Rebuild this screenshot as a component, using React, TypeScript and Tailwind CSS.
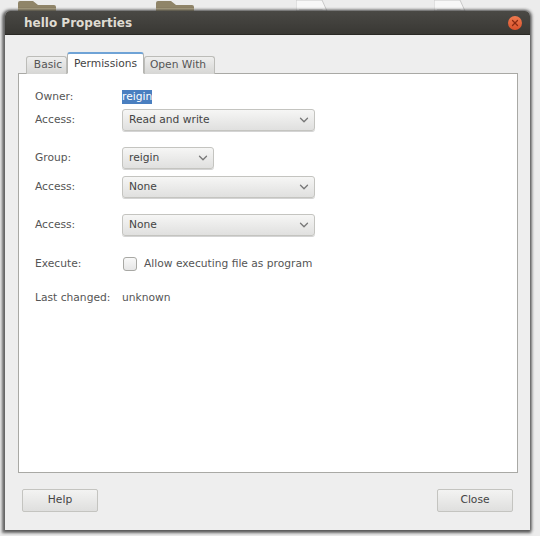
import { ChevronDown, X } from "lucide-react";

const font = "[font-family:'DejaVu_Sans',sans-serif]";

function FolderTop({ className }: { className: string }) {
    return (
        <svg className={className} width="38" height="11" viewBox="0 0 38 11">
            <path d="M0 11V3Q0 1 2 1H15L20 5H36Q38 5 38 7V11Z" fill="#8f8468" />
            <path d="M0 11V8H38V11Z" fill="#b3a888" />
        </svg>
    );
}

function PageTop({ className }: { className: string }) {
    return (
        <svg className={className} width="32" height="11" viewBox="0 0 32 11">
            <path d="M0 0H26L31 11H0Z" fill="#f7f7f7" stroke="#c9c9c9" />
            <path d="M3 9H26L28 11H3Z" fill="#dcdcdc" />
        </svg>
    );
}

function Select({ label, width }: { label: string; width: string }) {
    return (
        <div className={`${width} h-[22px] flex items-center justify-between pl-[6px] pr-[3px] rounded-[3px] border border-[#c4c4c0] bg-gradient-to-b from-[#f6f6f5] to-[#e0e0df] shadow-[0_1px_0_#d4d4d4]`}>
            <span className="text-[10.7px] text-[#444444]">{label}</span>
            <ChevronDown className="w-[14px] h-[14px] text-[#777777]" strokeWidth={2.25} />
        </div>
    );
}

function Row({ label, children, className }: { label: string; children: React.ReactNode; className?: string }) {
    return (
        <div className={`flex items-center ${className ?? ""}`}>
            <span className="w-[87px] shrink-0 text-[10.7px] text-[#555555]">{label}</span>
            {children}
        </div>
    );
}

function FooterButton({ label }: { label: string }) {
    return (
        <button className="w-[76px] h-[23px] rounded-[2px] border border-[#c4c4c0] bg-gradient-to-b from-[#f3f3f2] to-[#dfdfde] text-[10.7px] text-[#444444]">
            {label}
        </button>
    );
}

export default function App() {
    return (
        <div className={`w-[540px] h-[536px] overflow-hidden bg-[#ececec] flex flex-col ${font}`}>
            <div className="h-[11px] shrink-0 flex items-start overflow-hidden">
                <FolderTop className="ml-[18px]" />
                <FolderTop className="ml-[100px]" />
                <PageTop className="ml-[102px]" />
                <PageTop className="ml-[106px]" />
            </div>

            <div className="ml-[5px] w-[525px] h-[519px] flex flex-col rounded-t-[5px] bg-[#eeeeee] shadow-[-1px_1px_3px_2px_rgba(40,40,40,0.65),1px_0_3px_1px_rgba(60,60,60,0.45)]">
                <div className="h-[24px] shrink-0 flex items-center justify-between pl-[19px] pr-[8px] rounded-t-[5px] bg-gradient-to-b from-[#4a4945] to-[#393834] border-b border-[#2a2925]">
                    <span className="text-[12px] font-bold text-[#dfdbd2]">hello Properties</span>
                    <span className="w-[14px] h-[14px] rounded-full flex items-center justify-center bg-gradient-to-b from-[#ee7a4f] to-[#d9502a]">
                        <X className="w-[10px] h-[10px] text-[#8a2a12]" strokeWidth={3} />
                    </span>
                </div>

                <div className="flex-1 flex flex-col px-[13px] pt-[18px]">
                    <div className="h-[21px] flex items-end pl-[8px] relative z-10 -mb-px">
                        <div className="w-[41px] h-[18px] flex items-center justify-center pb-px pl-[3px] rounded-t-[3px] border border-b-0 border-[#bcbcb8] bg-gradient-to-b from-[#efefee] to-[#d6d6d4] text-[10.7px] text-[#555555]">
                            Basic
                        </div>
                        <div className="w-[77px] h-[22px] flex items-center justify-center pt-[2px] rounded-t-[3px] border border-[#b5b5b1] border-t-2 border-t-[#6fa3d6] border-b-white bg-white text-[10.7px] text-[#444444]">
                            Permissions
                        </div>
                        <div className="w-[71px] h-[18px] flex items-center justify-center pb-px pr-[3px] rounded-t-[3px] border border-b-0 border-[#bcbcb8] bg-gradient-to-b from-[#efefee] to-[#d6d6d4] text-[10.7px] text-[#555555]">
                            Open With
                        </div>
                    </div>

                    <div className="w-[500px] h-[400px] border border-[#a9a9a5] bg-white pl-[16px] pt-[16px]">
                        <Row label="Owner:" className="h-[14px]">
                            <span className="text-[10.7px] leading-[14px] bg-[#4a7fc0] text-white">reigin</span>
                        </Row>
                        <Row label="Access:" className="mt-[5px]">
                            <Select label="Read and write" width="w-[193px]" />
                        </Row>
                        <Row label="Group:" className="mt-[16px]">
                            <Select label="reigin" width="w-[92px]" />
                        </Row>
                        <Row label="Access:" className="mt-[7px]">
                            <Select label="None" width="w-[193px]" />
                        </Row>
                        <Row label="Access:" className="mt-[16px]">
                            <Select label="None" width="w-[193px]" />
                        </Row>
                        <Row label="Execute:" className="mt-[18px] h-[20px]">
                            <span className="ml-px w-[14px] h-[14px] rounded-[3px] border border-[#a8a8a4] bg-gradient-to-b from-[#f8f8f8] to-[#e6e6e6]" />
                            <span className="ml-[7px] text-[10.7px] text-[#555555]">Allow executing file as program</span>
                        </Row>
                        <Row label="Last changed:" className="mt-[17px] h-[14px]">
                            <span className="text-[10.7px] text-[#555555]">unknown</span>
                        </Row>
                    </div>

                    <div className="mt-[16px] flex justify-between pl-[4px] pr-[4px]">
                        <FooterButton label="Help" />
                        <FooterButton label="Close" />
                    </div>
                </div>
            </div>
        </div>
    );
}
